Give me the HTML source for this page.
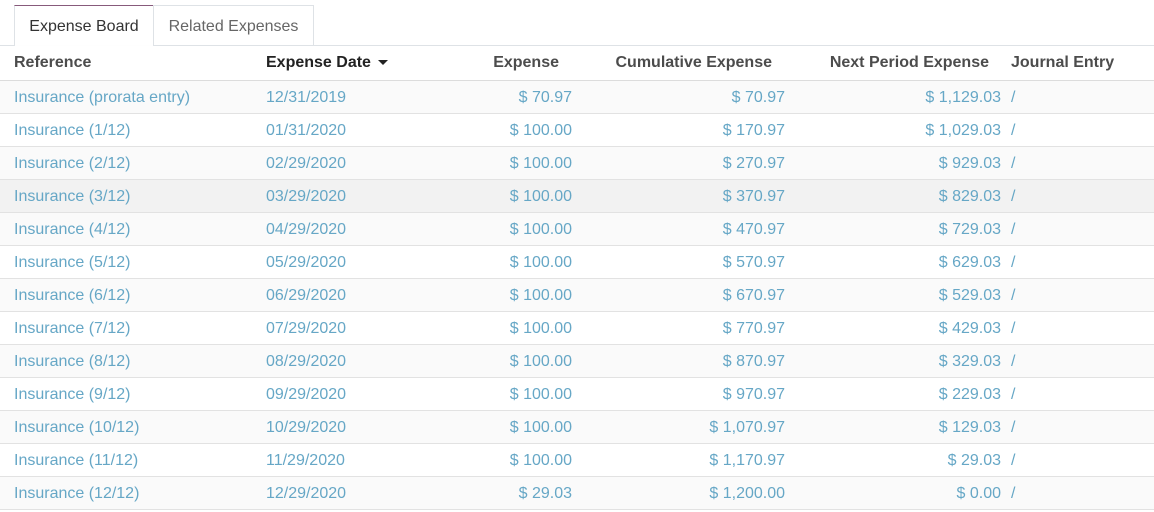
<!DOCTYPE html>
<html><head><meta charset="utf-8"><style>
body{margin:0;width:1154px;height:512px;background:#fff;font-family:"Liberation Sans",sans-serif;font-size:16px;overflow:hidden;position:relative}
.tabs{position:absolute;top:5px;left:0;width:1154px;height:40px;border-bottom:1px solid #dee2e6}
.tab{position:absolute;top:0;height:40px;box-sizing:border-box;line-height:42px;text-align:center;color:#4c4c4c;border:1px solid #dee2e6;border-bottom:none}
.t1{left:14px;width:140px;border-top:1px solid #875a7b;background:#fff;height:41px;color:#333}
.t2{left:153px;width:161px;color:#666}
.hdr{position:absolute;top:46px;left:0;width:1154px;height:34px;border-bottom:1px solid #dcdcdc;box-shadow:0 2px 3px rgba(0,0,0,.06);font-weight:bold;color:#4c4c4c}
.row{position:absolute;left:0;width:1154px;height:32px;border-bottom:1px solid #e2e2e2;color:#66a7c6}
.c{position:absolute;line-height:34px;white-space:nowrap}
.hdr .c{line-height:33px}
.r{text-align:right}
</style></head><body>
<div class="tabs"><div class="tab t1">Expense Board</div><div class="tab t2">Related Expenses</div></div>
<div class="hdr">
<div class="c" style="left:14px">Reference</div>
<div class="c" style="left:266px;color:#222">Expense Date <span style="display:inline-block;width:0;height:0;border-left:5px solid transparent;border-right:5px solid transparent;border-top:5px solid #222;vertical-align:middle;margin-left:3px"></span></div>
<div class="c r" style="right:595px">Expense</div>
<div class="c r" style="right:382px">Cumulative Expense</div>
<div class="c r" style="right:165px">Next Period Expense</div>
<div class="c" style="left:1011px">Journal Entry</div>
</div>
<div id="rows"></div>
<script>
var d=[["Insurance (prorata entry)","12/31/2019","70.97","70.97","1,129.03"],
["Insurance (1/12)","01/31/2020","100.00","170.97","1,029.03"],
["Insurance (2/12)","02/29/2020","100.00","270.97","929.03"],
["Insurance (3/12)","03/29/2020","100.00","370.97","829.03"],
["Insurance (4/12)","04/29/2020","100.00","470.97","729.03"],
["Insurance (5/12)","05/29/2020","100.00","570.97","629.03"],
["Insurance (6/12)","06/29/2020","100.00","670.97","529.03"],
["Insurance (7/12)","07/29/2020","100.00","770.97","429.03"],
["Insurance (8/12)","08/29/2020","100.00","870.97","329.03"],
["Insurance (9/12)","09/29/2020","100.00","970.97","229.03"],
["Insurance (10/12)","10/29/2020","100.00","1,070.97","129.03"],
["Insurance (11/12)","11/29/2020","100.00","1,170.97","29.03"],
["Insurance (12/12)","12/29/2020","29.03","1,200.00","0.00"]];
var h="";d.forEach(function(r,i){var bg=i==3?"#f2f2f2":(i%2==0?"#fafafa":"#fff");
h+='<div class="row" style="top:'+(81+i*33)+'px;background:'+bg+'"><div class="c" style="left:14px">'+r[0]+'</div><div class="c" style="left:266px">'+r[1]+'</div><div class="c r" style="right:582px">$ '+r[2]+'</div><div class="c r" style="right:369px">$ '+r[3]+'</div><div class="c r" style="right:153px">$ '+r[4]+'</div><div class="c" style="left:1011px">/</div></div>';});
document.getElementById("rows").innerHTML=h;
</script>
</body></html>
